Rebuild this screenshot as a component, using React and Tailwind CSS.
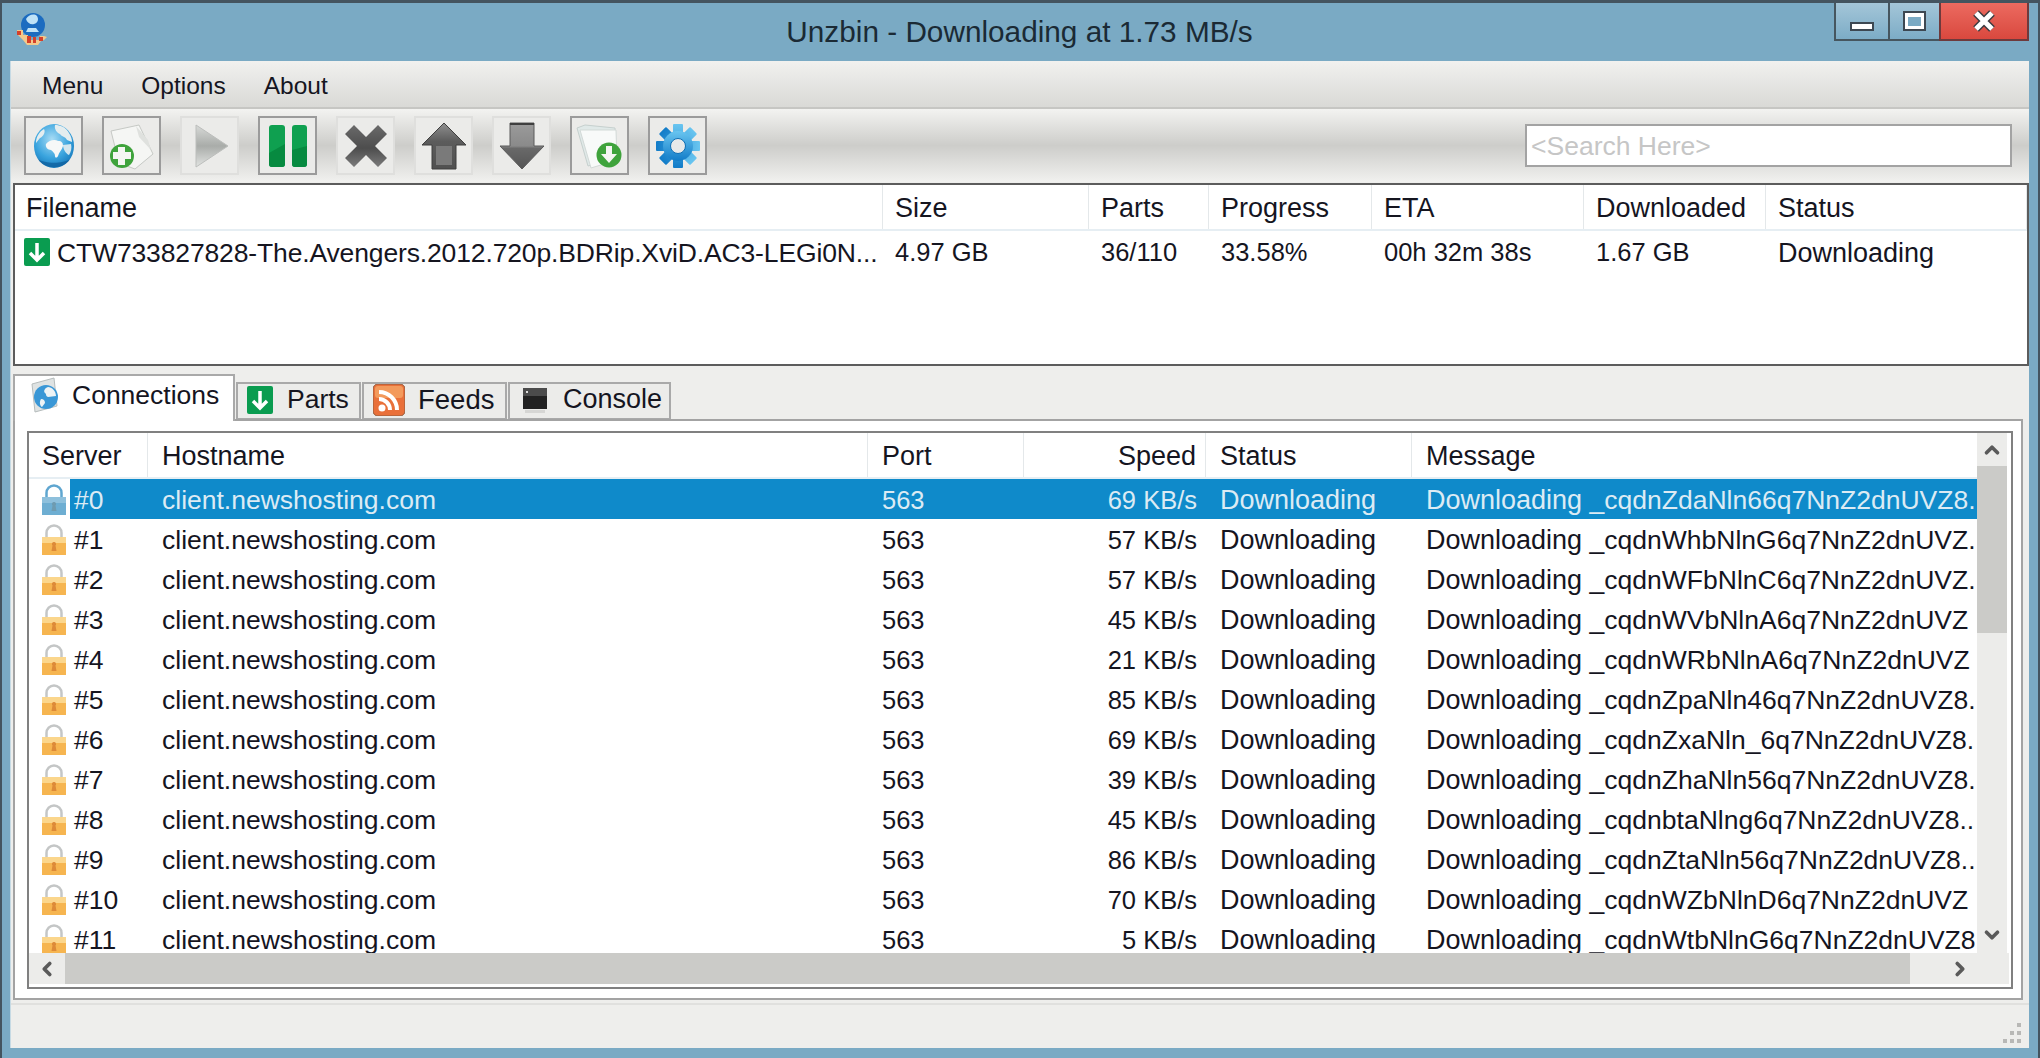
import React from 'react'
import { ChevronUp, ChevronDown, ChevronLeft, ChevronRight } from 'lucide-react'

const rows = [
  ['#0', '69 KB/s', '_cqdnZdaNln66q7NnZ2dnUVZ8.'],
  ['#1', '57 KB/s', '_cqdnWhbNlnG6q7NnZ2dnUVZ.'],
  ['#2', '57 KB/s', '_cqdnWFbNlnC6q7NnZ2dnUVZ.'],
  ['#3', '45 KB/s', '_cqdnWVbNlnA6q7NnZ2dnUVZ'],
  ['#4', '21 KB/s', '_cqdnWRbNlnA6q7NnZ2dnUVZ'],
  ['#5', '85 KB/s', '_cqdnZpaNln46q7NnZ2dnUVZ8.'],
  ['#6', '69 KB/s', '_cqdnZxaNln_6q7NnZ2dnUVZ8.'],
  ['#7', '39 KB/s', '_cqdnZhaNln56q7NnZ2dnUVZ8.'],
  ['#8', '45 KB/s', '_cqdnbtaNlng6q7NnZ2dnUVZ8..'],
  ['#9', '86 KB/s', '_cqdnZtaNln56q7NnZ2dnUVZ8..'],
  ['#10', '70 KB/s', '_cqdnWZbNlnD6q7NnZ2dnUVZ'],
  ['#11', '5 KB/s', '_cqdnWtbNlnG6q7NnZ2dnUVZ8'],
]

const Globe = () => (
  <svg width="42" height="46" viewBox="0 0 42 46">
    <defs>
      <radialGradient id="gl" cx="45%" cy="35%" r="70%">
        <stop offset="0%" stopColor="#a8dcf5" />
        <stop offset="60%" stopColor="#3aa4de" />
        <stop offset="100%" stopColor="#1475b8" />
      </radialGradient>
    </defs>
    <ellipse cx="21" cy="23" rx="20" ry="22" fill="url(#gl)" />
    <path d="M13 21c3-4 9-5 12-3 4 0 5 2 5 5-1 4-4 6-5 10-1 2-3 2-3 0 0-3-2-4-4-6-3 0-6-3-5-6z" fill="#f6f8f8" />
    <path d="M22 2c5 0 11 2 14 8 2 3 3 6 3 9l-5-2c-2-4-5-3-7-6-3-1-6-5-5-9zM3 20c0-6 3-11 8-14 2 3-1 8-4 9z" fill="#e4edef" />
    <path d="M30 22l8-1c1 4 0 8-2 11-3-1-6-6-6-10z" fill="#d4e6ee" />
    <path d="M5 36c6 11 26 11 32 0-7 5-25 5-32 0z" fill="#0f5f9c" opacity="0.75" />
  </svg>
)

const DocAdd = () => (
  <svg width="46" height="50" viewBox="0 0 46 50">
    <path d="M2 10L30 4l14 29-18 15-16-6z" fill="#f5f6f4" stroke="#c6c9c5" />
    <path d="M27 5l3 11 12 13-3-10z" fill="#dfe1de" />
    <circle cx="13" cy="35" r="12" fill="#3fa33c" />
    <path d="M9 26h7v5h6v7h-6v6H9v-6H4v-7h5z" fill="#f4f6f2" />
  </svg>
)

const Play = () => (
  <svg width="44" height="50" viewBox="0 0 44 50">
    <defs>
      <linearGradient id="pl" x1="0" y1="0" x2="0" y2="1">
        <stop offset="0%" stopColor="#d8dad8" />
        <stop offset="50%" stopColor="#a9aca9" />
        <stop offset="100%" stopColor="#e2e4e2" />
      </linearGradient>
    </defs>
    <path d="M8 4l32 21L8 46z" fill="url(#pl)" stroke="#bcbebc" />
  </svg>
)

const Pause = () => (
  <svg width="38" height="42" viewBox="0 0 38 42">
    <rect x="0" y="0" width="16" height="42" rx="3" fill="#0fa050" />
    <rect x="23" y="0" width="15" height="42" rx="3" fill="#0fa050" />
    <path d="M0 28l16-9v20a3 3 0 0 1-3 3H3a3 3 0 0 1-3-3zM23 25l15-4v18a3 3 0 0 1-3 3h-9a3 3 0 0 1-3-3z" fill="#078a40" />
  </svg>
)

const Cross = () => (
  <svg width="46" height="46" viewBox="0 0 46 46">
    <defs>
      <linearGradient id="cr" x1="0" y1="0" x2="0" y2="1">
        <stop offset="0%" stopColor="#6a6a6a" />
        <stop offset="55%" stopColor="#4d4d4d" />
        <stop offset="100%" stopColor="#7b7b7b" />
      </linearGradient>
    </defs>
    <path d="M11 2l12 12L35 2l9 9-12 12 12 12-9 9-12-12-12 12-9-9 12-12L2 11z" fill="url(#cr)" />
  </svg>
)

const ArrowUp = () => (
  <svg width="46" height="48" viewBox="0 0 46 48">
    <defs>
      <linearGradient id="au" x1="0" y1="0" x2="0" y2="1">
        <stop offset="0%" stopColor="#8f8f8f" />
        <stop offset="40%" stopColor="#5c5c5c" />
        <stop offset="100%" stopColor="#505050" />
      </linearGradient>
    </defs>
    <path d="M23 1l22 22H35v24H11V23H1z" fill="url(#au)" stroke="#3f3f3f" />
    <rect x="15" y="24" width="16" height="19" fill="#7a7a7a" />
  </svg>
)

const ArrowDown = () => (
  <svg width="46" height="48" viewBox="0 0 46 48">
    <defs>
      <linearGradient id="ad" x1="0" y1="0" x2="0" y2="1">
        <stop offset="0%" stopColor="#9b9b9b" />
        <stop offset="50%" stopColor="#8a8a8a" />
        <stop offset="55%" stopColor="#696969" />
        <stop offset="100%" stopColor="#555555" />
      </linearGradient>
    </defs>
    <path d="M11 1h24v23h10L23 47 1 24h10z" fill="url(#ad)" stroke="#5a5a5a" />
    <rect x="11" y="1" width="24" height="2" fill="#3f3f3f" />
  </svg>
)

const FolderAdd = () => (
  <svg width="50" height="48" viewBox="0 0 50 48">
    <path d="M2 6l8-3 30 3 1 30-28 8z" fill="#e0e9e8" stroke="#c6d0ce" />
    <path d="M5 8h36l1 30-26 8z" fill="#f8faf9" stroke="#d2d9d7" />
    <circle cx="34" cy="33" r="12.5" fill="#3fa33c" />
    <path d="M31 24h6v8h5l-8 9-8-9h5z" fill="#f4f6f2" />
  </svg>
)

const Gear = () => (
  <svg width="46" height="46" viewBox="0 0 46 46">
    <defs>
      <linearGradient id="ge" x1="0" y1="0" x2="0" y2="1">
        <stop offset="0%" stopColor="#69c5f0" />
        <stop offset="100%" stopColor="#127cc8" />
      </linearGradient>
    </defs>
    <g fill="url(#ge)">
      {[0, 45, 90, 135].map((a) => (
        <rect key={a} x="18" y="1" width="10" height="44" rx="1" transform={`rotate(${a} 23 23)`} />
      ))}
    </g>
    <circle cx="23" cy="23" r="15" fill="url(#ge)" />
    <circle cx="23" cy="23" r="7.5" fill="#e8eaea" stroke="#0f6fb4" />
  </svg>
)

const Lock = ({ selected }) => (
  <svg width="24" height="31" viewBox="0 0 24 31" className="shrink-0">
    <path d="M4.5 15V9a7.5 7.5 0 0 1 15 0v6" fill="none" stroke={selected ? '#5fa6d0' : '#c4c6c6'} strokeWidth="2.5" />
    <rect x="0" y="13" width="24" height="18" fill={selected ? '#6eaed2' : '#f6b550'} />
    <rect x="0" y="13" width="24" height="6" fill={selected ? '#8ec0dc' : '#fbd68c'} />
    <path d="M12 18a2 2 0 0 1 1.5 3.4l1 5.6h-5l1-5.6A2 2 0 0 1 12 18z" fill={selected ? '#6f9bb0' : '#dd8a38'} />
  </svg>
)

const GreenDown = ({ w = 26, h = 28 }) => (
  <svg width={w} height={h} viewBox="0 0 26 28" className="shrink-0">
    <rect width="26" height="28" rx="2" fill="#0a9c50" />
    <path d="M13 5v17M6 15l7 7 7-7" fill="none" stroke="#fff" strokeWidth="3.5" />
  </svg>
)

const Rss = () => (
  <svg width="32" height="32" viewBox="0 0 32 32" className="shrink-0">
    <rect width="32" height="32" rx="5" fill="#e9703a" stroke="#8f5a3c" />
    <rect x="2" y="2" width="28" height="12" rx="3" fill="#f39a5c" />
    <circle cx="9" cy="24" r="3.5" fill="#fff" />
    <path d="M6 15a11 11 0 0 1 11 11M6 8a18 18 0 0 1 18 18" fill="none" stroke="#fff" strokeWidth="4" />
  </svg>
)

const ConsoleIcon = () => (
  <svg width="28" height="28" viewBox="0 0 28 28" className="shrink-0">
    <rect x="2" y="2" width="24" height="21" fill="#222" />
    <rect x="2" y="2" width="24" height="8" fill="#4c4c4c" />
    <rect x="5" y="5" width="2" height="2" fill="#ddd" />
    <rect x="4" y="24" width="20" height="3" fill="#d6d6d4" />
  </svg>
)

const ConnIcon = () => (
  <svg width="34" height="36" viewBox="0 0 34 36" className="shrink-0">
    <path d="M3 7l22-6 3 28-22 6z" fill="#dfe3e3" stroke="#b6bcbc" />
    <circle cx="17" cy="20" r="12" fill="#3a97d6" />
    <path d="M19 10c4 0 8 4 8 9l-8 1c-3-1-1-3-3-4-2-2 0-5 3-6zM12 22c3 0 4 2 4 4l-3 4c-2-1-3-5-1-8z" fill="#eef3f5" />
  </svg>
)

const AppIcon = () => (
  <svg width="32" height="32" viewBox="0 0 32 32">
    <circle cx="17" cy="12" r="12" fill="#1c6cc0" />
    <path d="M10 6c2-4 8-6 11-3 2 3 1 7-3 8-3 1-7-1-8-5zM12 15h8l3 4H10z" fill="#bfe2f6" />
    <path d="M1 17h6v5h5v5h12v-4h4l3 1-3 3-3 1-3 4H11l-4-5-3-3-3-3z" fill="#f5c98a" />
    <path d="M1 18h4v4H1zM11 23h4v7h-4zM17 24h3v6h-3zM23 24h4v4h-4z" fill="#d6402a" />
  </svg>
)

const ToolButton = ({ dim, children }) => (
  <div className={`w-[59px] h-[59px] flex items-center justify-center bg-[#ebebe9] border-2 ${dim ? 'border-[#dfdfdd]' : 'border-[#9b9b9b]'}`}>
    {children}
  </div>
)

const Tab = ({ active, icon, label, className }) => (
  <div className={`flex items-center border-2 border-[#a9a9a9] ${active ? 'h-[47px] bg-white border-b-0 relative z-10' : 'h-[38px] bg-[#ececea] mb-[1px] pb-[3px]'} ${className}`}>
    {icon}
    <span className="whitespace-nowrap">{label}</span>
  </div>
)

const topCols = 'grid grid-cols-[868px_206px_120px_163px_212px_182px_1fr]'
const lowCols = 'grid grid-cols-[119px_720px_156px_182px_206px_565px]'
const cellH = 'h-full flex items-center overflow-hidden whitespace-nowrap'

export default function App() {
  return (
    <div className="h-screen w-[2040px] flex flex-col overflow-hidden bg-[#7aaac4] border-t-[3px] border-l-[2px] border-r-[2px] border-[#44545f] pl-[8px] pr-[9px] pb-[10px] text-[26.5px] leading-none text-[#15151f] font-['Liberation_Sans',sans-serif]">
      <div className="h-[58px] shrink-0 flex items-start">
        <div className="flex-1 pl-[6px] pt-[10px]">
          <AppIcon />
        </div>
        <div className="pt-[14px] mr-[6px] text-[29.75px] text-[#1b2a35] whitespace-nowrap">Unzbin - Downloading at 1.73 MB/s</div>
        <div className="flex-1 flex justify-end">
          <div className="w-[54px] h-[38px] flex items-center justify-center pt-[11px] bg-gradient-to-b from-[#a4c6d8] to-[#7cacc6] border-2 border-t-0 border-r-0 border-[#46565f]">
            <div className="w-[24px] h-[9px] bg-white border-2 border-[#3d4852]"></div>
          </div>
          <div className="w-[51px] h-[38px] flex items-center justify-center bg-gradient-to-b from-[#a4c6d8] to-[#7cacc6] border-2 border-t-0 border-r-0 border-[#46565f]">
            <div className="w-[19px] h-[16px] bg-[#7aaac4] border-x-[3px] border-t-[4px] border-b-[3px] border-white outline-2 outline-[#3d4852]"></div>
          </div>
          <div className="w-[90px] h-[38px] flex items-center justify-center bg-gradient-to-b from-[#ec6a60] to-[#d9483e] border-2 border-t-0 border-[#6e3a3c]">
            <svg width="24" height="22" viewBox="0 0 24 22">
              <path d="M4 3l16 16M20 3L4 19" stroke="#3b3b40" strokeWidth="8" />
              <path d="M4 3l16 16M20 3L4 19" stroke="#fff" strokeWidth="5" />
            </svg>
          </div>
        </div>
      </div>

      <div className="flex-1 min-h-0 flex flex-col bg-[#eeeeec] border-l border-[#c6dae4]">
        <div className="h-[48px] shrink-0 flex items-center gap-[38px] pl-[31px] pt-[4px] text-[24.5px] bg-gradient-to-b from-[#f1f1ef] to-[#d9d9d6] border-b-2 border-[#c6c6c3]">
          <span>Menu</span>
          <span>Options</span>
          <span>About</span>
        </div>

        <div className="h-[73px] shrink-0 flex items-center justify-between pl-[13px] pr-[17px] bg-gradient-to-b from-[#f3f3f1] via-[#cdcdca] to-[#f1f1ef]">
          <div className="flex gap-[19px]">
            <ToolButton><Globe /></ToolButton>
            <ToolButton><DocAdd /></ToolButton>
            <ToolButton dim><Play /></ToolButton>
            <ToolButton><Pause /></ToolButton>
            <ToolButton dim><Cross /></ToolButton>
            <ToolButton dim><ArrowUp /></ToolButton>
            <ToolButton dim><ArrowDown /></ToolButton>
            <ToolButton><FolderAdd /></ToolButton>
            <ToolButton><Gear /></ToolButton>
          </div>
          <div className="w-[487px] h-[43px] flex items-center pl-[4px] pt-[2px] bg-white border-2 border-[#a3a3a3] text-[#c6c6c6]">&lt;Search Here&gt;</div>
        </div>

        <div className="h-[183px] shrink-0 ml-[2px] mt-[1px] bg-white border-2 border-[#5c5c5c] flex flex-col">
          <div className={`h-[46px] ${topCols} border-b-2 border-[#e6eef3] text-[27px]`}>
            {['Filename', 'Size', 'Parts', 'Progress', 'ETA', 'Downloaded', 'Status'].map((h, i) => (
              <div key={h} className={`${cellH} ${i === 0 ? 'pl-[11px]' : 'pl-[12px]'} pt-[2px] border-r border-[#e4e8ea]`}>{h}</div>
            ))}
          </div>
          <div className={`h-[42px] ${topCols} text-[25.5px]`}>
            <div className={`${cellH} pl-[9px] gap-[7px] text-[26.5px] tracking-[-0.14px]`}>
              <GreenDown />
              <span className="pt-[2px]">CTW733827828-The.Avengers.2012.720p.BDRip.XviD.AC3-LEGi0N...</span>
            </div>
            <div className={`${cellH} pt-[2px] pl-[12px]`}>4.97 GB</div>
            <div className={`${cellH} pt-[2px] pl-[12px]`}>36/110</div>
            <div className={`${cellH} pt-[2px] pl-[12px]`}>33.58%</div>
            <div className={`${cellH} pt-[2px] pl-[12px]`}>00h 32m 38s</div>
            <div className={`${cellH} pt-[2px] pl-[12px]`}>1.67 GB</div>
            <div className={`${cellH} pt-[2px] pl-[12px] text-[27px]`}>Downloading</div>
          </div>
        </div>

        <div className="mt-[8px] ml-[2px] shrink-0 flex items-end -mb-[2px] gap-[1px]">
          <Tab active label="Connections" icon={<ConnIcon />} className="w-[222px] pl-[14px] gap-[9px] pb-[7px]" />
          <Tab label="Parts" icon={<GreenDown w={28} h={28} />} className="w-[125px] pl-[8px] gap-[13px]" />
          <Tab label="Feeds" icon={<Rss />} className="w-[145px] pl-[9px] gap-[13px] text-[27.5px]" />
          <Tab label="Console" icon={<ConsoleIcon />} className="w-[163px] pl-[11px] gap-[14px] text-[27px]" />
        </div>

        <div className="h-[581px] shrink-0 ml-[2px] mr-[6px] bg-white border-2 border-[#a3a3a3] pt-[10px] pb-[9px] pl-[12px] pr-[8px] flex">
          <div className="flex-1 min-w-0 border-2 border-[#808080] flex flex-col">
            <div className="flex-1 min-h-0 flex">
              <div className="w-[1948px] shrink-0 flex flex-col overflow-hidden">
                <div className={`h-[46px] shrink-0 ${lowCols} border-b-2 border-[#e6eef3] text-[27px]`}>
                  <div className={`${cellH} pt-[2px] pl-[13px] border-r border-[#e4e8ea]`}>Server</div>
                  <div className={`${cellH} pt-[2px] pl-[14px] border-r border-[#e4e8ea]`}>Hostname</div>
                  <div className={`${cellH} pt-[2px] pl-[14px] border-r border-[#e4e8ea]`}>Port</div>
                  <div className={`${cellH} pt-[2px] justify-end pr-[9px] border-r border-[#e4e8ea]`}>Speed</div>
                  <div className={`${cellH} pt-[2px] pl-[14px] border-r border-[#e4e8ea]`}>Status</div>
                  <div className={`${cellH} pt-[2px] pl-[14px]`}>Message</div>
                </div>
                <div className="flex-1 min-h-0 overflow-hidden">
                  {rows.map(([id, speed, msg], i) => {
                    const sel = i === 0
                    const bg = sel ? 'bg-[#0f8aca] text-[#dcebf4]' : ''
                    return (
                      <div key={id} className={`h-[40px] ${lowCols}`}>
                        <div className="h-full flex items-center pl-[13px]">
                          <Lock selected={sel} />
                          <div className={`h-full flex-1 flex items-center ml-[4px] pl-[4px] pt-[2px] ${bg}`}>{id}</div>
                        </div>
                        <div className={`${cellH} pt-[2px] pl-[14px] ${bg}`}>client.newshosting.com</div>
                        <div className={`${cellH} pt-[3px] pl-[14px] text-[25.5px] ${bg}`}>563</div>
                        <div className={`${cellH} pt-[3px] justify-end pr-[9px] text-[25.5px] ${bg}`}>{speed}</div>
                        <div className={`${cellH} pt-[2px] pl-[14px] text-[27px] ${bg}`}>Downloading</div>
                        <div className={`${cellH} pt-[2px] pl-[14px] ${bg}`}>
                          <span className="text-[27px]">Downloading&nbsp;</span>
                          <span>{msg}</span>
                        </div>
                      </div>
                    )
                  })}
                </div>
              </div>
              <div className="w-[30px] shrink-0 bg-[#ececea] flex flex-col items-center text-[#5a5a5a]">
                <div className="h-[33px] shrink-0 flex items-center">
                  <ChevronUp size={22} strokeWidth={4} />
                </div>
                <div className="w-full h-[167px] shrink-0 bg-[#cbcbc8]"></div>
                <div className="flex-1"></div>
                <div className="h-[36px] shrink-0 flex items-center">
                  <ChevronDown size={22} strokeWidth={4} />
                </div>
              </div>
            </div>
            <div className="h-[31px] shrink-0 flex bg-[#ececea] text-[#5a5a5a] mr-[2px] mb-[3px]">
              <div className="w-[36px] shrink-0 flex items-center justify-center">
                <ChevronLeft size={22} strokeWidth={4} />
              </div>
              <div className="w-[1845px] shrink-0 bg-[#cbcbc8]"></div>
              <div className="flex-1 flex items-center justify-end pr-[38px]">
                <ChevronRight size={22} strokeWidth={4} />
              </div>
            </div>
          </div>
        </div>

        <div className="flex-1 min-h-0 mt-[3px] border-t-2 border-[#e0e0de] flex items-end justify-end pr-[6px] pb-[5px]">
          <svg width="20" height="20" viewBox="0 0 20 20" fill="#b8b8b6">
            <rect x="14" y="0" width="4" height="4" />
            <rect x="7" y="8" width="4" height="4" />
            <rect x="14" y="8" width="4" height="4" />
            <rect x="0" y="16" width="4" height="4" />
            <rect x="7" y="16" width="4" height="4" />
            <rect x="14" y="16" width="4" height="4" />
          </svg>
        </div>
      </div>
    </div>
  )
}
